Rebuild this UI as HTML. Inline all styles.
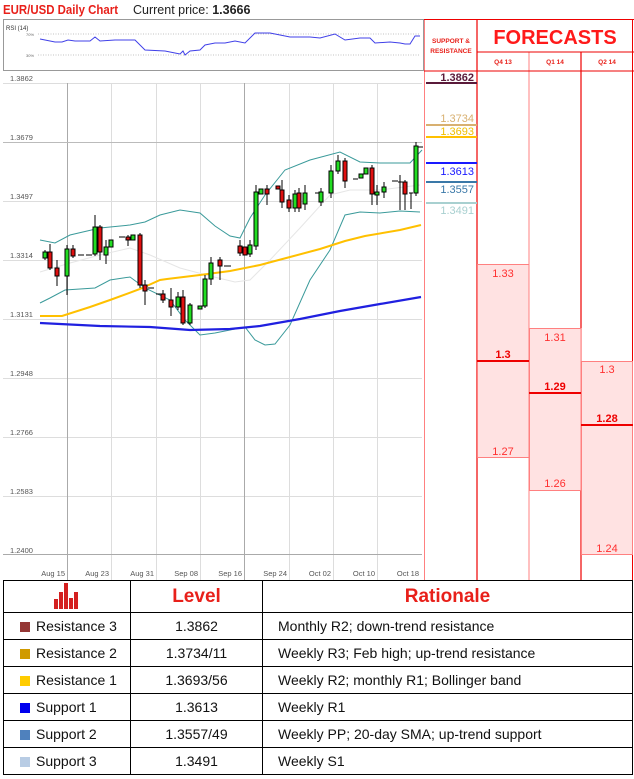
<!DOCTYPE html>
<html><head><meta charset="utf-8"><style>
body{margin:0;background:#fff;width:634px;height:779px;overflow:hidden;font-family:"Liberation Sans",sans-serif}
svg{position:absolute;left:0;top:0}
table{position:absolute;left:3px;top:580px;border-collapse:collapse;width:630px}
td{border:1.5px solid #000;font-size:14px;color:#111;height:26px;padding:0}
.h td{height:31px;color:#e8201a;font-weight:bold;font-size:19px;text-align:center}
.c{text-align:center}
.sq{display:inline-block;width:10px;height:10px;margin:0 6px 0 16px;vertical-align:-1px}
</style></head><body>
<svg width="634" height="580" font-family="Liberation Sans, sans-serif">
<text x="3" y="14" font-size="13" fill="#e8201a" font-weight="bold" textLength="115" lengthAdjust="spacingAndGlyphs">EUR/USD Daily Chart</text>
<text x="133" y="14" font-size="12.5" fill="#222">Current price: <tspan font-weight="bold">1.3666</tspan></text>
<!-- RSI -->
<rect x="3.5" y="19.5" width="420" height="51" fill="#fff" stroke="#999"/>
<text x="6" y="30" font-size="6" fill="#333">RSI (14)</text>
<text x="26" y="36" font-size="4" fill="#666">70%</text><text x="26" y="57" font-size="4" fill="#666">30%</text>
<line x1="38" y1="34" x2="420" y2="34" stroke="#888" stroke-dasharray="1,1.5" stroke-width=".6"/>
<line x1="38" y1="55" x2="420" y2="55" stroke="#888" stroke-dasharray="1,1.5" stroke-width=".6"/>
<polyline fill="none" stroke="#4040e8" stroke-width="1" points="40,39 55,42 62,42 68,40 75,41 90,41 95,37 100,41 115,40 135,40 145,50 165,51 175,53 180,54 183,51 185,55 190,51 200,50 205,45 215,43 225,43 235,41 245,43 255,33 270,33 280,35 290,37 310,37 320,38 335,34 345,40 360,38 370,38 375,43 390,42 400,43 405,44 410,44 415,36 420,36"/>
<!-- grid -->
<g stroke="#ddd" stroke-width="1">
<line x1="3" y1="83.5" x2="422" y2="83.5"/><line x1="3" y1="142.5" x2="422" y2="142.5"/><line x1="3" y1="201.5" x2="422" y2="201.5"/><line x1="3" y1="260.5" x2="422" y2="260.5"/><line x1="3" y1="319.5" x2="422" y2="319.5"/><line x1="3" y1="378.5" x2="422" y2="378.5"/><line x1="3" y1="437.5" x2="422" y2="437.5"/><line x1="3" y1="496.5" x2="422" y2="496.5"/>
<line x1="111.5" y1="83" x2="111.5" y2="580"/><line x1="156.5" y1="83" x2="156.5" y2="580"/><line x1="200.5" y1="83" x2="200.5" y2="580"/><line x1="289.5" y1="83" x2="289.5" y2="580"/><line x1="333.5" y1="83" x2="333.5" y2="580"/><line x1="377.5" y1="83" x2="377.5" y2="580"/>
</g>
<g stroke="#aaa"><line x1="67.5" y1="83" x2="67.5" y2="580"/><line x1="244.5" y1="83" x2="244.5" y2="580"/><line x1="3" y1="554.5" x2="422" y2="554.5"/><line x1="3" y1="142.5" x2="422" y2="142.5" stroke="#bbb"/></g>
<g font-size="7.5" fill="#555">
<text x="10" y="81">1.3862</text><text x="10" y="140">1.3679</text><text x="10" y="199">1.3497</text><text x="10" y="258">1.3314</text><text x="10" y="317">1.3131</text><text x="10" y="376">1.2948</text><text x="10" y="435">1.2766</text><text x="10" y="494">1.2583</text><text x="10" y="553">1.2400</text>
</g>
<g font-size="7.5" fill="#555" text-anchor="end">
<text x="65" y="576">Aug 15</text><text x="109" y="576">Aug 23</text><text x="154" y="576">Aug 31</text><text x="198" y="576">Sep 08</text><text x="242" y="576">Sep 16</text><text x="287" y="576">Sep 24</text><text x="331" y="576">Oct 02</text><text x="375" y="576">Oct 10</text><text x="419" y="576">Oct 18</text>
</g>
<!-- indicators -->
<polyline fill="none" stroke="#e6e6e6" stroke-width="1" points="40,272 70,263 100,255 130,248 150,255 180,268 210,276 235,282 250,280 270,260 300,228 330,195 350,190 380,190 420,185"/>
<polyline fill="none" stroke="#3a9a9a" stroke-width="1" points="40,240 55,243 70,235 100,228 130,225 145,222 160,215 180,210 200,213 215,226 230,236 240,238 250,218 265,195 285,170 310,160 340,152 360,162 380,163 410,163 422,150"/>
<polyline fill="none" stroke="#3a9a9a" stroke-width="1" points="40,303 50,298 65,290 95,288 110,280 130,277 145,288 170,300 185,320 200,335 215,333 230,330 245,327 255,340 265,345 275,344 290,325 310,280 330,250 345,215 360,212 380,213 400,211 420,212"/>
<polyline fill="none" stroke="#ffc000" stroke-width="2" points="40,316 62,316 90,307 110,300 140,289 160,280 167,279 200,275 230,271 260,265 290,257 320,249 345,241 365,236 400,230 421,225"/>
<polyline fill="none" stroke="#2020e0" stroke-width="2.2" points="40,323 100,326 150,327 190,330 230,329 260,326 300,319 340,311 380,304 421,297"/>
<!-- candles -->
<g stroke="#000" stroke-width="1">
<line x1="45" y1="250" x2="45" y2="260"/><rect x="43" y="252" width="4" height="6" fill="#22dd22"/>
<line x1="50" y1="244" x2="50" y2="270"/><rect x="48" y="252" width="4" height="16" fill="#e01010"/>
<line x1="57" y1="260" x2="57" y2="286"/><rect x="55" y="268" width="4" height="8" fill="#e01010"/>
<line x1="67" y1="245" x2="67" y2="295"/><rect x="65" y="249" width="4" height="27" fill="#22dd22"/>
<line x1="73" y1="245" x2="73" y2="258"/><rect x="71" y="249" width="4" height="7" fill="#e01010"/>
<line x1="78" y1="255" x2="84" y2="255"/><line x1="86" y1="255" x2="92" y2="255"/>
<line x1="95" y1="215" x2="95" y2="256"/><rect x="93" y="227" width="4" height="27" fill="#22dd22"/>
<line x1="100" y1="225" x2="100" y2="260"/><rect x="98" y="227" width="4" height="25" fill="#e01010"/>
<line x1="106" y1="240" x2="106" y2="264"/><rect x="104" y="247" width="4" height="8" fill="#22dd22"/>
<rect x="109" y="240" width="4" height="7" fill="#22dd22"/>
<line x1="119" y1="237" x2="125" y2="237"/>
<line x1="128" y1="235" x2="128" y2="246"/><rect x="126" y="237" width="4" height="3" fill="#e01010"/>
<rect x="131" y="235" width="4" height="5" fill="#22dd22"/>
<line x1="140" y1="233" x2="140" y2="288"/><rect x="138" y="235" width="4" height="50" fill="#e01010"/>
<line x1="145" y1="280" x2="145" y2="305"/><rect x="143" y="285" width="4" height="6" fill="#e01010"/>
<line x1="148" y1="288" x2="154" y2="288"/><line x1="156" y1="294" x2="161" y2="294"/>
<line x1="163" y1="290" x2="163" y2="303"/><rect x="161" y="294" width="4" height="6" fill="#e01010"/>
<line x1="171" y1="288" x2="171" y2="316"/><rect x="169" y="300" width="4" height="7" fill="#e01010"/>
<line x1="178" y1="292" x2="178" y2="310"/><rect x="176" y="297" width="4" height="10" fill="#22dd22"/>
<line x1="183" y1="290" x2="183" y2="325"/><rect x="181" y="297" width="4" height="26" fill="#e01010"/>
<line x1="190" y1="303" x2="190" y2="325"/><rect x="188" y="305" width="4" height="18" fill="#22dd22"/>
<rect x="198" y="306" width="4" height="3" fill="#22dd22"/>
<line x1="205" y1="275" x2="205" y2="308"/><rect x="203" y="279" width="4" height="27" fill="#22dd22"/>
<line x1="211" y1="257" x2="211" y2="285"/><rect x="209" y="263" width="4" height="16" fill="#22dd22"/>
<line x1="220" y1="257" x2="220" y2="280"/><rect x="218" y="260" width="4" height="6" fill="#e01010"/>
<line x1="224" y1="266" x2="231" y2="266"/>
<line x1="240" y1="240" x2="240" y2="256"/><rect x="238" y="246" width="4" height="7" fill="#e01010"/>
<rect x="243" y="247" width="4" height="8" fill="#e01010"/>
<line x1="250" y1="240" x2="250" y2="257"/><rect x="248" y="245" width="4" height="9" fill="#22dd22"/>
<line x1="256" y1="185" x2="256" y2="250"/><rect x="254" y="192" width="4" height="54" fill="#22dd22"/>
<rect x="259" y="189" width="4" height="5" fill="#22dd22"/>
<line x1="267" y1="185" x2="267" y2="205"/><rect x="265" y="189" width="4" height="5" fill="#e01010"/>
<rect x="276" y="186" width="4" height="3" fill="#e01010"/>
<line x1="282" y1="180" x2="282" y2="208"/><rect x="280" y="190" width="4" height="12" fill="#e01010"/>
<line x1="289" y1="195" x2="289" y2="212"/><rect x="287" y="200" width="4" height="8" fill="#e01010"/>
<line x1="295" y1="190" x2="295" y2="212"/><rect x="293" y="194" width="4" height="14" fill="#22dd22"/>
<line x1="299" y1="188" x2="299" y2="212"/><rect x="297" y="193" width="4" height="15" fill="#e01010"/>
<line x1="305" y1="185" x2="305" y2="210"/><rect x="303" y="193" width="4" height="11" fill="#22dd22"/>
<line x1="315" y1="193" x2="321" y2="193"/>
<line x1="321" y1="188" x2="321" y2="206"/><rect x="319" y="192" width="4" height="10" fill="#22dd22"/>
<line x1="331" y1="165" x2="331" y2="198"/><rect x="329" y="171" width="4" height="22" fill="#22dd22"/>
<line x1="338" y1="155" x2="338" y2="174"/><rect x="336" y="161" width="4" height="10" fill="#22dd22"/>
<line x1="345" y1="158" x2="345" y2="188"/><rect x="343" y="161" width="4" height="20" fill="#e01010"/>
<line x1="353" y1="179" x2="358" y2="179"/>
<rect x="359" y="174" width="4" height="4" fill="#22dd22"/>
<rect x="364" y="168" width="4" height="6" fill="#22dd22"/>
<line x1="372" y1="165" x2="372" y2="205"/><rect x="370" y="168" width="4" height="26" fill="#e01010"/>
<line x1="377" y1="185" x2="377" y2="205"/><rect x="375" y="192" width="4" height="3" fill="#22dd22"/>
<line x1="384" y1="182" x2="384" y2="198"/><rect x="382" y="187" width="4" height="5" fill="#22dd22"/>
<line x1="392" y1="181" x2="398" y2="181"/><line x1="398" y1="182" x2="403" y2="182"/>
<line x1="400" y1="175" x2="400" y2="210"/>
<line x1="405" y1="180" x2="405" y2="210"/><rect x="403" y="182" width="4" height="12" fill="#e01010"/>
<line x1="411" y1="193" x2="411" y2="209"/><line x1="409" y1="193" x2="413" y2="193"/>
<line x1="416" y1="142" x2="416" y2="196"/><rect x="414" y="146" width="4" height="47" fill="#22dd22"/>
<line x1="418" y1="147" x2="423" y2="147"/>
</g>
<!-- SR + forecasts -->
<line x1="424.5" y1="19" x2="424.5" y2="580" stroke="#ff8080"/>
<line x1="477" y1="19" x2="477" y2="580" stroke="#e00" stroke-width="1.2"/>
<line x1="529" y1="52" x2="529" y2="580" stroke="#ff8080"/>
<line x1="581" y1="52" x2="581" y2="580" stroke="#e00" stroke-width="1.2"/>
<line x1="632.5" y1="19" x2="632.5" y2="580" stroke="#e00"/>
<line x1="424" y1="19.5" x2="634" y2="19.5" stroke="#e00"/>
<line x1="477" y1="52" x2="634" y2="52" stroke="#e00"/>
<line x1="424" y1="71" x2="634" y2="71" stroke="#e00"/>
<g font-size="6.5" fill="#e8201a" font-weight="bold" text-anchor="middle">
<text x="451" y="43">SUPPORT &amp;</text><text x="451" y="53">RESISTANCE</text>
<text x="503" y="64">Q4 13</text><text x="555" y="64">Q1 14</text><text x="607" y="64">Q2 14</text>
</g>
<text x="555" y="44" font-size="20" fill="#ff1a1a" font-weight="bold" text-anchor="middle">FORECASTS</text>
<g font-size="11" text-anchor="end">
<text x="474" y="81" fill="#5a1a3a" font-weight="bold">1.3862</text><rect x="426" y="82" width="51" height="2" fill="#5a1a3a"/>
<text x="474" y="122" fill="#d8b070">1.3734</text><rect x="426" y="124" width="51" height="2" fill="#d8b070"/>
<text x="474" y="135" fill="#f0c000">1.3693</text><rect x="426" y="136" width="51" height="2" fill="#ffc000"/>
<rect x="426" y="162" width="51" height="2" fill="#1a1aff"/><text x="474" y="175" fill="#1a1aff">1.3613</text>
<rect x="426" y="181" width="51" height="2" fill="#3a78a8"/><text x="474" y="193" fill="#3a78a8">1.3557</text>
<rect x="426" y="202" width="51" height="2" fill="#a8d0d0"/><text x="474" y="214" fill="#a8d0d0">1.3491</text>
</g>
<g fill="#ffe2e2" stroke="#ff8080" stroke-width="1">
<rect x="477.5" y="264.5" width="51.5" height="193"/><rect x="529.5" y="328.5" width="51.5" height="162"/><rect x="581.5" y="361.5" width="51" height="193"/>
</g>
<rect x="477" y="360" width="52" height="2" fill="#e00"/><rect x="529" y="392" width="52" height="2" fill="#e00"/><rect x="581" y="424" width="52" height="2" fill="#e00"/>
<g font-size="11" fill="#ff3030" text-anchor="middle">
<text x="503" y="277">1.33</text><text x="503" y="358" font-weight="bold" fill="#e00">1.3</text><text x="503" y="455">1.27</text>
<text x="555" y="341">1.31</text><text x="555" y="390" font-weight="bold" fill="#e00">1.29</text><text x="555" y="487">1.26</text>
<text x="607" y="373">1.3</text><text x="607" y="422" font-weight="bold" fill="#e00">1.28</text><text x="607" y="552">1.24</text>
</g>
</svg>
<table>
<tr class="h"><td style="width:126px"><svg width="26" height="27" style="position:static;vertical-align:middle"><g fill="#d42020"><rect x="0" y="16" width="4" height="10"/><rect x="5" y="9" width="4" height="17"/><rect x="10" y="0" width="4" height="26"/><rect x="15" y="15" width="4" height="11"/><rect x="20" y="9" width="4" height="17"/></g></svg></td><td style="width:131px">Level</td><td>Rationale</td></tr>
<tr><td><span class="sq" style="background:#953735"></span>Resistance 3</td><td class="c">1.3862</td><td style="padding-left:15px">Monthly R2; down-trend resistance</td></tr>
<tr><td><span class="sq" style="background:#d09a00"></span>Resistance 2</td><td class="c">1.3734/11</td><td style="padding-left:15px">Weekly R3; Feb high; up-trend resistance</td></tr>
<tr><td><span class="sq" style="background:#ffcc00"></span>Resistance 1</td><td class="c">1.3693/56</td><td style="padding-left:15px">Weekly R2; monthly R1; Bollinger band</td></tr>
<tr><td><span class="sq" style="background:#0000ee"></span>Support 1</td><td class="c">1.3613</td><td style="padding-left:15px">Weekly R1</td></tr>
<tr><td><span class="sq" style="background:#4f81bd"></span>Support 2</td><td class="c">1.3557/49</td><td style="padding-left:15px">Weekly PP; 20-day SMA; up-trend support</td></tr>
<tr><td><span class="sq" style="background:#b8cce4"></span>Support 3</td><td class="c">1.3491</td><td style="padding-left:15px">Weekly S1</td></tr>
</table>
</body></html>
